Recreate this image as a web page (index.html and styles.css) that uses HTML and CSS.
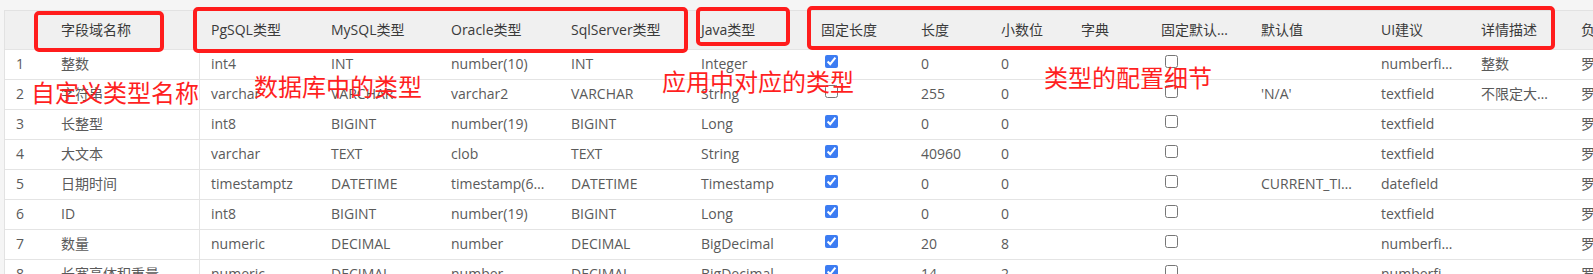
FILE: index.html
```html
<!DOCTYPE html>
<html lang="zh-CN">
<head>
<meta charset="utf-8">
<title>字段域类型</title>
<link rel="stylesheet" href="styles.css">
</head>
<body>
<div class="page">
  <div class="grid">
    <table class="types">
      <colgroup>
        <col class="w45"><col class="w150"><col class="w120"><col class="w120"><col class="w120"><col class="w130"><col class="w120"><col class="w100"><col class="w80"><col class="w80"><col class="w80"><col class="w100"><col class="w120"><col class="w100"><col class="w100"><col class="w100">
      </colgroup>
      <thead>
        <tr>
          <th></th><th>字段域名称</th><th>PgSQL类型</th><th>MySQL类型</th><th>Oracle类型</th><th>SqlServer类型</th><th>Java类型</th><th>固定长度</th><th>长度</th><th>小数位</th><th>字典</th><th>固定默认…</th><th>默认值</th><th>UI建议</th><th>详情描述</th><th>负责人</th>
        </tr>
      </thead>
      <tbody>
        <tr><td>1</td><td class="lock">整数</td><td>int4</td><td>INT</td><td>number(10)</td><td>INT</td><td>Integer</td><td><input type="checkbox" checked></td><td>0</td><td>0</td><td></td><td><input type="checkbox"></td><td></td><td>numberfi…</td><td>整数</td><td>罗工</td></tr>
        <tr><td>2</td><td class="lock">字符串</td><td>varchar</td><td>VARCHAR</td><td>varchar2</td><td>VARCHAR</td><td>String</td><td><input type="checkbox"></td><td>255</td><td>0</td><td></td><td><input type="checkbox"></td><td>'N/A'</td><td>textfield</td><td>不限定大…</td><td>罗工</td></tr>
        <tr><td>3</td><td class="lock">长整型</td><td>int8</td><td>BIGINT</td><td>number(19)</td><td>BIGINT</td><td>Long</td><td><input type="checkbox" checked></td><td>0</td><td>0</td><td></td><td><input type="checkbox"></td><td></td><td>textfield</td><td></td><td>罗工</td></tr>
        <tr><td>4</td><td class="lock">大文本</td><td>varchar</td><td>TEXT</td><td>clob</td><td>TEXT</td><td>String</td><td><input type="checkbox" checked></td><td>40960</td><td>0</td><td></td><td><input type="checkbox"></td><td></td><td>textfield</td><td></td><td>罗工</td></tr>
        <tr><td>5</td><td class="lock">日期时间</td><td>timestamptz</td><td>DATETIME</td><td>timestamp(6…</td><td>DATETIME</td><td>Timestamp</td><td><input type="checkbox" checked></td><td>0</td><td>0</td><td></td><td><input type="checkbox"></td><td>CURRENT_TI…</td><td>datefield</td><td></td><td>罗工</td></tr>
        <tr><td>6</td><td class="lock">ID</td><td>int8</td><td>BIGINT</td><td>number(19)</td><td>BIGINT</td><td>Long</td><td><input type="checkbox" checked></td><td>0</td><td>0</td><td></td><td><input type="checkbox"></td><td></td><td>textfield</td><td></td><td>罗工</td></tr>
        <tr><td>7</td><td class="lock">数量</td><td>numeric</td><td>DECIMAL</td><td>number</td><td>DECIMAL</td><td>BigDecimal</td><td><input type="checkbox" checked></td><td>20</td><td>8</td><td></td><td><input type="checkbox"></td><td></td><td>numberfi…</td><td></td><td>罗工</td></tr>
        <tr><td>8</td><td class="lock">长宽高体积重量</td><td>numeric</td><td>DECIMAL</td><td>number</td><td>DECIMAL</td><td>BigDecimal</td><td><input type="checkbox" checked></td><td>14</td><td>2</td><td></td><td><input type="checkbox"></td><td></td><td>numberfi…</td><td></td><td>罗工</td></tr>
      </tbody>
    </table>
  </div>

  <div class="mark box-name"></div>
  <div class="mark box-db"></div>
  <div class="mark box-java"></div>
  <div class="mark box-cfg"></div>

  <div class="note note-name">自定义类型名称</div>
  <div class="note note-db">数据库中的类型</div>
  <div class="note note-java">应用中对应的类型</div>
  <div class="note note-cfg">类型的配置细节</div>
</div>
</body>
</html>
```

FILE: styles.css
```css
html, body {
  margin: 0;
  padding: 0;
  background: #f5f5f5;
}

.page {
  position: relative;
  width: 1593px;
  height: 274px;
  overflow: hidden;
  padding: 10px 0 0 4px;
  box-sizing: border-box;
  font-family: "Open Sans", "Noto Sans CJK SC", sans-serif;
  font-size: 14px;
}

.grid {
  border-left: 1px solid #e2e2e2;
  border-top: 1px solid #e2e2e2;
  background: #fff;
  width: max-content;
}

.types {
  border-collapse: separate;
  border-spacing: 0;
  table-layout: fixed;
  width: 1665px;
}

.w45 { width: 45px; }
.w80 { width: 80px; }
.w100 { width: 100px; }
.w120 { width: 120px; }
.w130 { width: 130px; }
.w150 { width: 150px; }

.types th,
.types td {
  padding: 0 11px;
  text-align: left;
  white-space: nowrap;
  overflow: hidden;
  border-bottom: 1px solid #e4e4e4;
}

.types th {
  line-height: 38px;
  background: #f0f0f0;
  color: #3a3a3a;
  font-weight: normal;
}

.types td {
  line-height: 27px;
  padding-bottom: 2px;
  vertical-align: top;
  color: #5a5a5a;
}

.types td.lock {
  border-right: 1px solid #e4e4e4;
}

.types input[type="checkbox"] {
  width: 13px;
  height: 13px;
  margin: 5px 0 0 4px;
  vertical-align: top;
  accent-color: #3c7cf2;
}

.mark {
  position: absolute;
  border: 4px solid #ff1c1c;
  border-radius: 5px;
  box-sizing: border-box;
}

.box-name { left: 34px; top: 11px; width: 130px; height: 41px; }
.box-db { left: 193px; top: 7px; width: 495px; height: 46px; }
.box-java { left: 696px; top: 7px; width: 94px; height: 39px; }
.box-cfg { left: 807px; top: 6px; width: 748px; height: 44px; }

.note {
  position: absolute;
  color: #ff1f1f;
  font-family: "Noto Sans CJK SC", sans-serif;
  font-size: 24px;
  line-height: 24px;
  white-space: nowrap;
}

.note-name { left: 31px; top: 80px; }
.note-db { left: 254px; top: 74px; }
.note-java { left: 662px; top: 69px; }
.note-cfg { left: 1044px; top: 65px; }
```
